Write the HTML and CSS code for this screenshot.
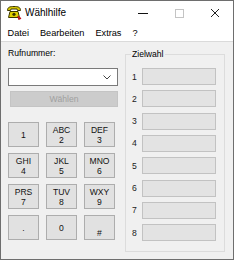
FILE: index.html
```html
<!DOCTYPE html>
<html>
<head>
<meta charset="utf-8">
<link rel="stylesheet" href="styles.css">
</head>
<body>
<div class="window">
  <div class="titlebar">
    <svg class="appicon" width="16" height="15" viewBox="0 0 16 15">
      <path d="M1.5 5.5 C1.5 2 4 1.5 8 1.5 C12 1.5 14.5 2 14.5 5.5 L11.5 5.5 L11 4 L5 4 L4.5 5.5 Z" fill="#d8c800" stroke="#3b3600" stroke-width="1"/>
      <path d="M4 6.5 L12 6.5 L13.5 12.5 L2.5 12.5 Z" fill="#e0d000" stroke="#3b3600" stroke-width="1"/>
      <circle cx="8" cy="9.3" r="1.6" fill="#3b3600"/>
      <path d="M12 11 L13 14 L15 13" fill="none" stroke="#c0141e" stroke-width="1.6"/>
    </svg>
    <span class="title">Wählhilfe</span>
    <div class="controls">
      <span class="ctl"><svg width="10" height="10" viewBox="0 0 10 10"><path d="M0 5.5 H10" stroke="#111" stroke-width="1"/></svg></span>
      <span class="ctl"><svg width="10" height="10" viewBox="0 0 10 10"><rect x="1.5" y="1.5" width="8" height="8" fill="none" stroke="#c4c4c4" stroke-width="1"/></svg></span>
      <span class="ctl"><svg width="10" height="10" viewBox="0 0 10 10"><path d="M1 1 L9 9 M9 1 L1 9" stroke="#222" stroke-width="1"/></svg></span>
    </div>
  </div>
  <div class="menubar">
    <span class="menu">Datei</span>
    <span class="menu">Bearbeiten</span>
    <span class="menu">Extras</span>
    <span class="menu">?</span>
  </div>
  <div class="client">
    <div class="left">
      <div class="label">Rufnummer:</div>
      <div class="combo">
        <svg class="chev" width="8" height="5" viewBox="0 0 8 5"><path d="M0.5 0.5 L4 4 L7.5 0.5" fill="none" stroke="#444" stroke-width="1"/></svg>
      </div>
      <div class="dial">Wählen</div>
      <div class="keypad">
        <div class="key">1</div>
        <div class="key">ABC<br>2</div>
        <div class="key">DEF<br>3</div>
        <div class="key">GHI<br>4</div>
        <div class="key">JKL<br>5</div>
        <div class="key">MNO<br>6</div>
        <div class="key">PRS<br>7</div>
        <div class="key">TUV<br>8</div>
        <div class="key">WXY<br>9</div>
        <div class="key">.</div>
        <div class="key">0</div>
        <div class="key"><br>#</div>
      </div>
    </div>
    <div class="group">
      <div class="legend">Zielwahl</div>
      <div class="slots">
        <div class="slot"><span class="num">1</span><span class="field"></span></div>
        <div class="slot"><span class="num">2</span><span class="field"></span></div>
        <div class="slot"><span class="num">3</span><span class="field"></span></div>
        <div class="slot"><span class="num">4</span><span class="field"></span></div>
        <div class="slot"><span class="num">5</span><span class="field"></span></div>
        <div class="slot"><span class="num">6</span><span class="field"></span></div>
        <div class="slot"><span class="num">7</span><span class="field"></span></div>
        <div class="slot"><span class="num">8</span><span class="field"></span></div>
      </div>
    </div>
  </div>
</div>
</body>
</html>
```
FILE: styles.css
```css
html, body {
  margin: 0;
  padding: 0;
  background: #ffffff;
}
body {
  font-family: "Liberation Sans", Arial, sans-serif;
  color: #000;
}
.window {
  width: 234px;
  height: 260px;
  box-sizing: border-box;
  border: 1px solid #6e6e6e;
  display: flex;
  flex-direction: column;
  background: #fff;
}
.titlebar {
  height: 21px;
  display: flex;
  align-items: center;
  padding-top: 2px;
  box-sizing: border-box;
}
.appicon {
  margin-left: 5px;
  margin-right: 3px;
  flex: none;
}
.title {
  font-size: 10px;
  line-height: 12px;
}
.controls {
  margin-left: auto;
  display: flex;
}
.ctl {
  width: 36px;
  height: 19px;
  display: flex;
  align-items: center;
  justify-content: center;
}
.menubar {
  height: 20px;
  box-sizing: border-box;
  display: flex;
  align-items: center;
  padding: 2px 0 0 1px;
  border-bottom: 1px solid #dadada;
}
.menu {
  font-size: 9.2px;
  line-height: 12px;
  padding: 0 5.5px;
}
.client {
  flex: 1;
  background: #f0f0f0;
  display: flex;
  gap: 7px;
  padding: 6px 7px 6px 7px;
}
.left {
  width: 110px;
  display: flex;
  flex-direction: column;
}
.label {
  font-size: 8.6px;
  line-height: 10px;
  height: 10px;
}
.combo {
  margin-top: 10px;
  height: 18px;
  box-sizing: border-box;
  background: #fff;
  border: 1px solid #7a7a7a;
  display: flex;
  align-items: center;
  justify-content: flex-end;
  padding-right: 6px;
}
.dial {
  margin-top: 5px;
  margin-left: 2px;
  height: 16px;
  box-sizing: border-box;
  background: #cccccc;
  border: 1px solid #c4c4c4;
  color: #a0a0a0;
  font-size: 8.6px;
  display: flex;
  align-items: center;
  justify-content: center;
}
.keypad {
  margin-top: 15px;
  display: grid;
  grid-template-columns: repeat(3, 31px);
  grid-auto-rows: 25px;
  column-gap: 7px;
  row-gap: 6px;
}
.key {
  box-sizing: border-box;
  background: #e1e1e1;
  border: 1px solid #adadad;
  font-size: 8.6px;
  line-height: 10px;
  display: flex;
  align-items: center;
  justify-content: center;
  text-align: center;
  color: #111;
}
.group {
  width: 100px;
  box-sizing: border-box;
  margin-top: 6px;
  border: 1px solid #dcdcdc;
  padding: 0 8px 10px 6px;
  display: flex;
  flex-direction: column;
  height: 198px;
}
.legend {
  margin-top: -6px;
  margin-left: -1px;
  align-self: flex-start;
  background: #f0f0f0;
  padding: 0 1px;
  font-size: 8.6px;
  line-height: 10px;
}
.slots {
  margin-top: 9px;
  display: flex;
  flex-direction: column;
  gap: 5.33px;
}
.slot {
  display: flex;
  align-items: center;
  height: 17px;
}
.num {
  width: 10px;
  font-size: 8.6px;
  color: #222;
}
.field {
  width: 74px;
  height: 17px;
  box-sizing: border-box;
  background: #e3e3e3;
  border: 1px solid #c2c2c2;
}
```
